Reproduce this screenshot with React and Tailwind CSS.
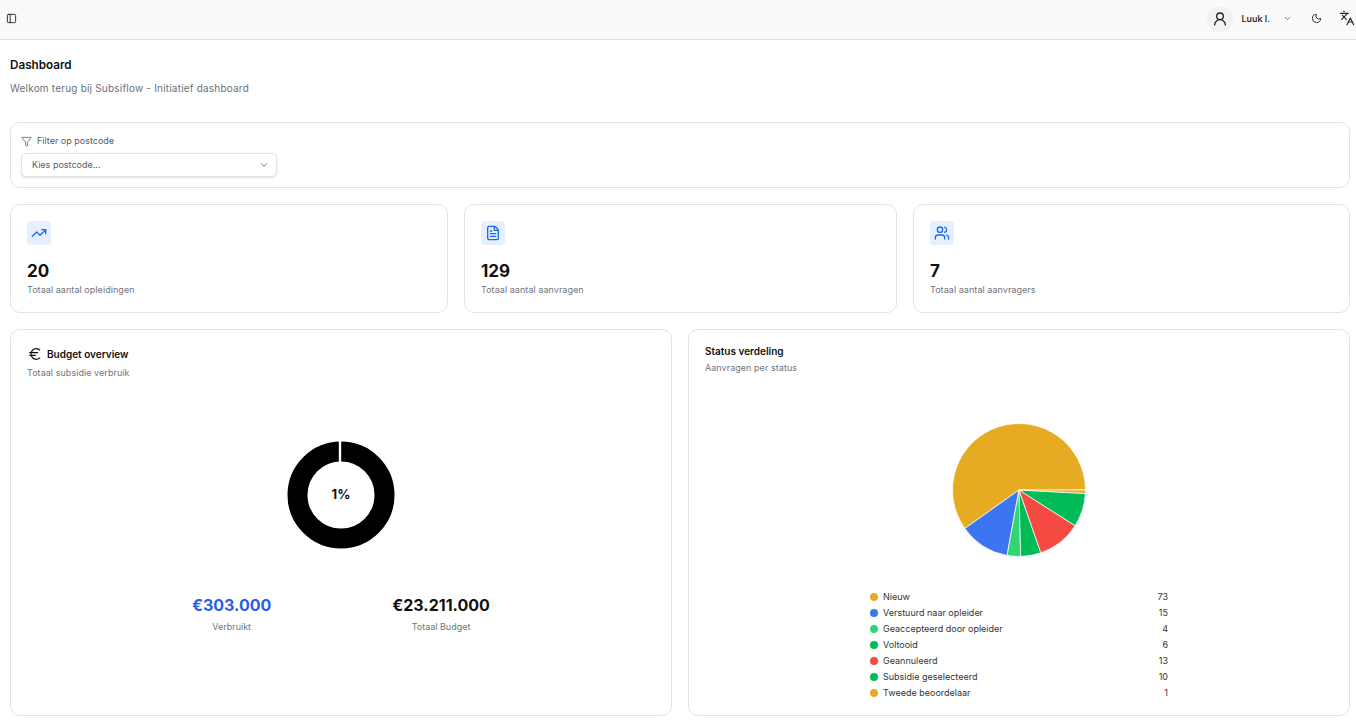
import React from "react";
import {
  PanelLeft,
  UserRound,
  ChevronDown,
  Moon,
  Languages,
  Funnel,
  TrendingUp,
  FileText,
  Users,
  Euro,
} from "lucide-react";

const stats = [
  { icon: TrendingUp, value: "20", label: "Totaal aantal opleidingen" },
  { icon: FileText, value: "129", label: "Totaal aantal aanvragen" },
  { icon: Users, value: "7", label: "Totaal aantal aanvragers" },
];

const statuses = [
  { name: "Nieuw", count: 73, color: "#e6ab22", dot: "bg-[#e6ab22]" },
  { name: "Verstuurd naar opleider", count: 15, color: "#3b76f0", dot: "bg-[#3b76f0]" },
  { name: "Geaccepteerd door opleider", count: 4, color: "#32d574", dot: "bg-[#32d574]" },
  { name: "Voltooid", count: 6, color: "#00bb56", dot: "bg-[#00bb56]" },
  { name: "Geannuleerd", count: 13, color: "#f44a42", dot: "bg-[#f44a42]" },
  { name: "Subsidie geselecteerd", count: 10, color: "#00bb56", dot: "bg-[#00bb56]" },
  { name: "Tweede beoordelaar", count: 1, color: "#e6ab22", dot: "bg-[#e6ab22]" },
];

const StatusPie = () => {
  const total = statuses.reduce((sum, s) => sum + s.count, 0);
  const r = 66.5;
  const c = 68;
  let angle = 0;
  return (
    <svg width="136" height="136" viewBox="0 0 136 136">
      {statuses.map((s) => {
        const start = angle;
        angle += (s.count / total) * Math.PI * 2;
        const x1 = c + r * Math.cos(start);
        const y1 = c - r * Math.sin(start);
        const x2 = c + r * Math.cos(angle);
        const y2 = c - r * Math.sin(angle);
        const large = angle - start > Math.PI ? 1 : 0;
        return (
          <path
            key={s.name}
            d={`M${c} ${c}L${x1} ${y1}A${r} ${r} 0 ${large} 0 ${x2} ${y2}Z`}
            fill={s.color}
            stroke="#fff"
            strokeWidth="0.75"
          />
        );
      })}
    </svg>
  );
};

const BudgetRing = () => (
  <div className="relative h-[108px] w-[108px]">
    <svg width="108" height="108" viewBox="0 0 108 108">
      <circle cx="54" cy="54" r="43.5" fill="none" stroke="#000" strokeWidth="20" />
      <rect x="51.8" y="0" width="2.4" height="21" fill="#fff" />
    </svg>
    <div className="absolute inset-0 flex items-center justify-center text-[13px] font-bold text-[#111]">
      1%
    </div>
  </div>
);

const Card = ({ className = "", children }) => (
  <div className={`rounded-[10px] border border-[#e3e3e3] bg-white ${className}`}>{children}</div>
);

export default function App() {
  return (
    <div className="h-[724px] overflow-hidden bg-white font-['Inter',sans-serif] text-[#111]">
      <header className="flex h-[40px] items-center justify-between border-b border-[#e2e2e2] bg-[#fafafa] pb-[2px] pl-[6px] pr-[1px]">
        <PanelLeft className="h-[11px] w-[11px] text-[#222]" strokeWidth={2} />
        <div className="flex items-center">
          <div className="flex h-[26px] w-[26px] items-center justify-center rounded-full bg-[#f2f2f2]">
            <UserRound className="h-[16px] w-[16px] text-[#222]" strokeWidth={2} />
          </div>
          <span className="ml-[8px] text-[9px] font-medium">Luuk I.</span>
          <ChevronDown className="ml-[13px] h-[9px] w-[9px] text-[#555]" />
          <Moon className="ml-[19px] h-[11px] w-[11px] text-[#222]" strokeWidth={2} />
          <Languages className="ml-[17px] mb-[2px] h-[16px] w-[16px] text-[#222]" strokeWidth={1.75} />
        </div>
      </header>

      <main className="pl-[10px] pr-[6px]">
        <h1 className="mt-[18px] text-[11.7px] leading-[14px] font-semibold">Dashboard</h1>
        <p className="mt-[9px] text-[10px] leading-[14px] tracking-[0.2px] text-[#6b7078]">
          Welkom terug bij Subsiflow - Initiatief dashboard
        </p>

        <Card className="mt-[27px] h-[66px] px-[10px] pt-[11px]">
          <div className="flex items-center gap-[5px] text-[9px] leading-[14px] text-[#555b66]">
            <Funnel className="h-[11px] w-[11px]" strokeWidth={1.75} />
            Filter op postcode
          </div>
          <div className="mt-[5px] flex h-[24px] w-[256px] items-center justify-between rounded-[5px] border border-[#e3e3e3] bg-white pl-[10px] pr-[7px] text-[9px] text-[#555b66] shadow-[0_1px_2px_rgba(0,0,0,0.12)]">
            Kies postcode...
            <ChevronDown className="h-[10px] w-[10px]" />
          </div>
        </Card>

        <div className="mt-[16px] grid grid-cols-[438fr_433fr_437fr] gap-[16px]">
          {stats.map((stat) => {
            const Icon = stat.icon;
            return (
              <Card key={stat.label} className="h-[109px] px-[16px] pt-[16px]">
                <div className="flex h-[24px] w-[24px] items-center justify-center rounded-[4px] bg-[#e6efff]">
                  <Icon className="h-[16px] w-[16px] text-[#1a6bf0]" strokeWidth={2} />
                </div>
                <div className="mt-[14px] text-[17px] leading-[24px] font-bold">{stat.value}</div>
                <div className="text-[9px] leading-[13px] tracking-[0.06px] text-[#71757e]">
                  {stat.label}
                </div>
              </Card>
            );
          })}
        </div>

        <div className="mt-[16px] grid grid-cols-2 gap-[16px]">
          <Card className="flex h-[387px] flex-col px-[16px] pt-[16px]">
            <div className="flex items-center gap-[4px] text-[10px] leading-[16px] font-semibold">
              <Euro className="h-[16px] w-[16px] text-[#111]" strokeWidth={1.75} />
              Budget overview
            </div>
            <div className="mt-[4px] text-[9px] leading-[13px] tracking-[0.05px] text-[#71757e]">
              Totaal subsidie verbruik
            </div>
            <div className="mt-[62px] flex justify-center">
              <BudgetRing />
            </div>
            <div className="mt-[46px] ml-[165px] flex gap-[121px]">
              <div className="flex flex-col items-center">
                <div className="text-[16px] leading-[20px] font-bold text-[#2a5ee8]">€303.000</div>
                <div className="mt-[5px] text-[9px] leading-[13px] text-[#71757e]">Verbruikt</div>
              </div>
              <div className="flex flex-col items-center">
                <div className="text-[16px] leading-[20px] font-bold">€23.211.000</div>
                <div className="mt-[5px] text-[9px] leading-[13px] text-[#71757e]">Totaal Budget</div>
              </div>
            </div>
          </Card>

          <Card className="flex h-[387px] flex-col px-[16px] pt-[13px]">
            <div className="text-[10px] leading-[16px] font-semibold">Status verdeling</div>
            <div className="mt-[2px] text-[9px] leading-[13px] tracking-[0.05px] text-[#71757e]">
              Aanvragen per status
            </div>
            <div className="mt-[48px] flex justify-center">
              <StatusPie />
            </div>
            <div className="mx-auto mt-[31px] w-[298px]">
              {statuses.map((s) => (
                <div key={s.name} className="flex h-[16px] items-center justify-between text-[9px] text-[#333]">
                  <div className="flex items-center gap-[5px]">
                    <span className={`h-[8px] w-[8px] rounded-full ${s.dot}`} />
                    {s.name}
                  </div>
                  <span>{s.count}</span>
                </div>
              ))}
            </div>
          </Card>
        </div>
      </main>
    </div>
  );
}
